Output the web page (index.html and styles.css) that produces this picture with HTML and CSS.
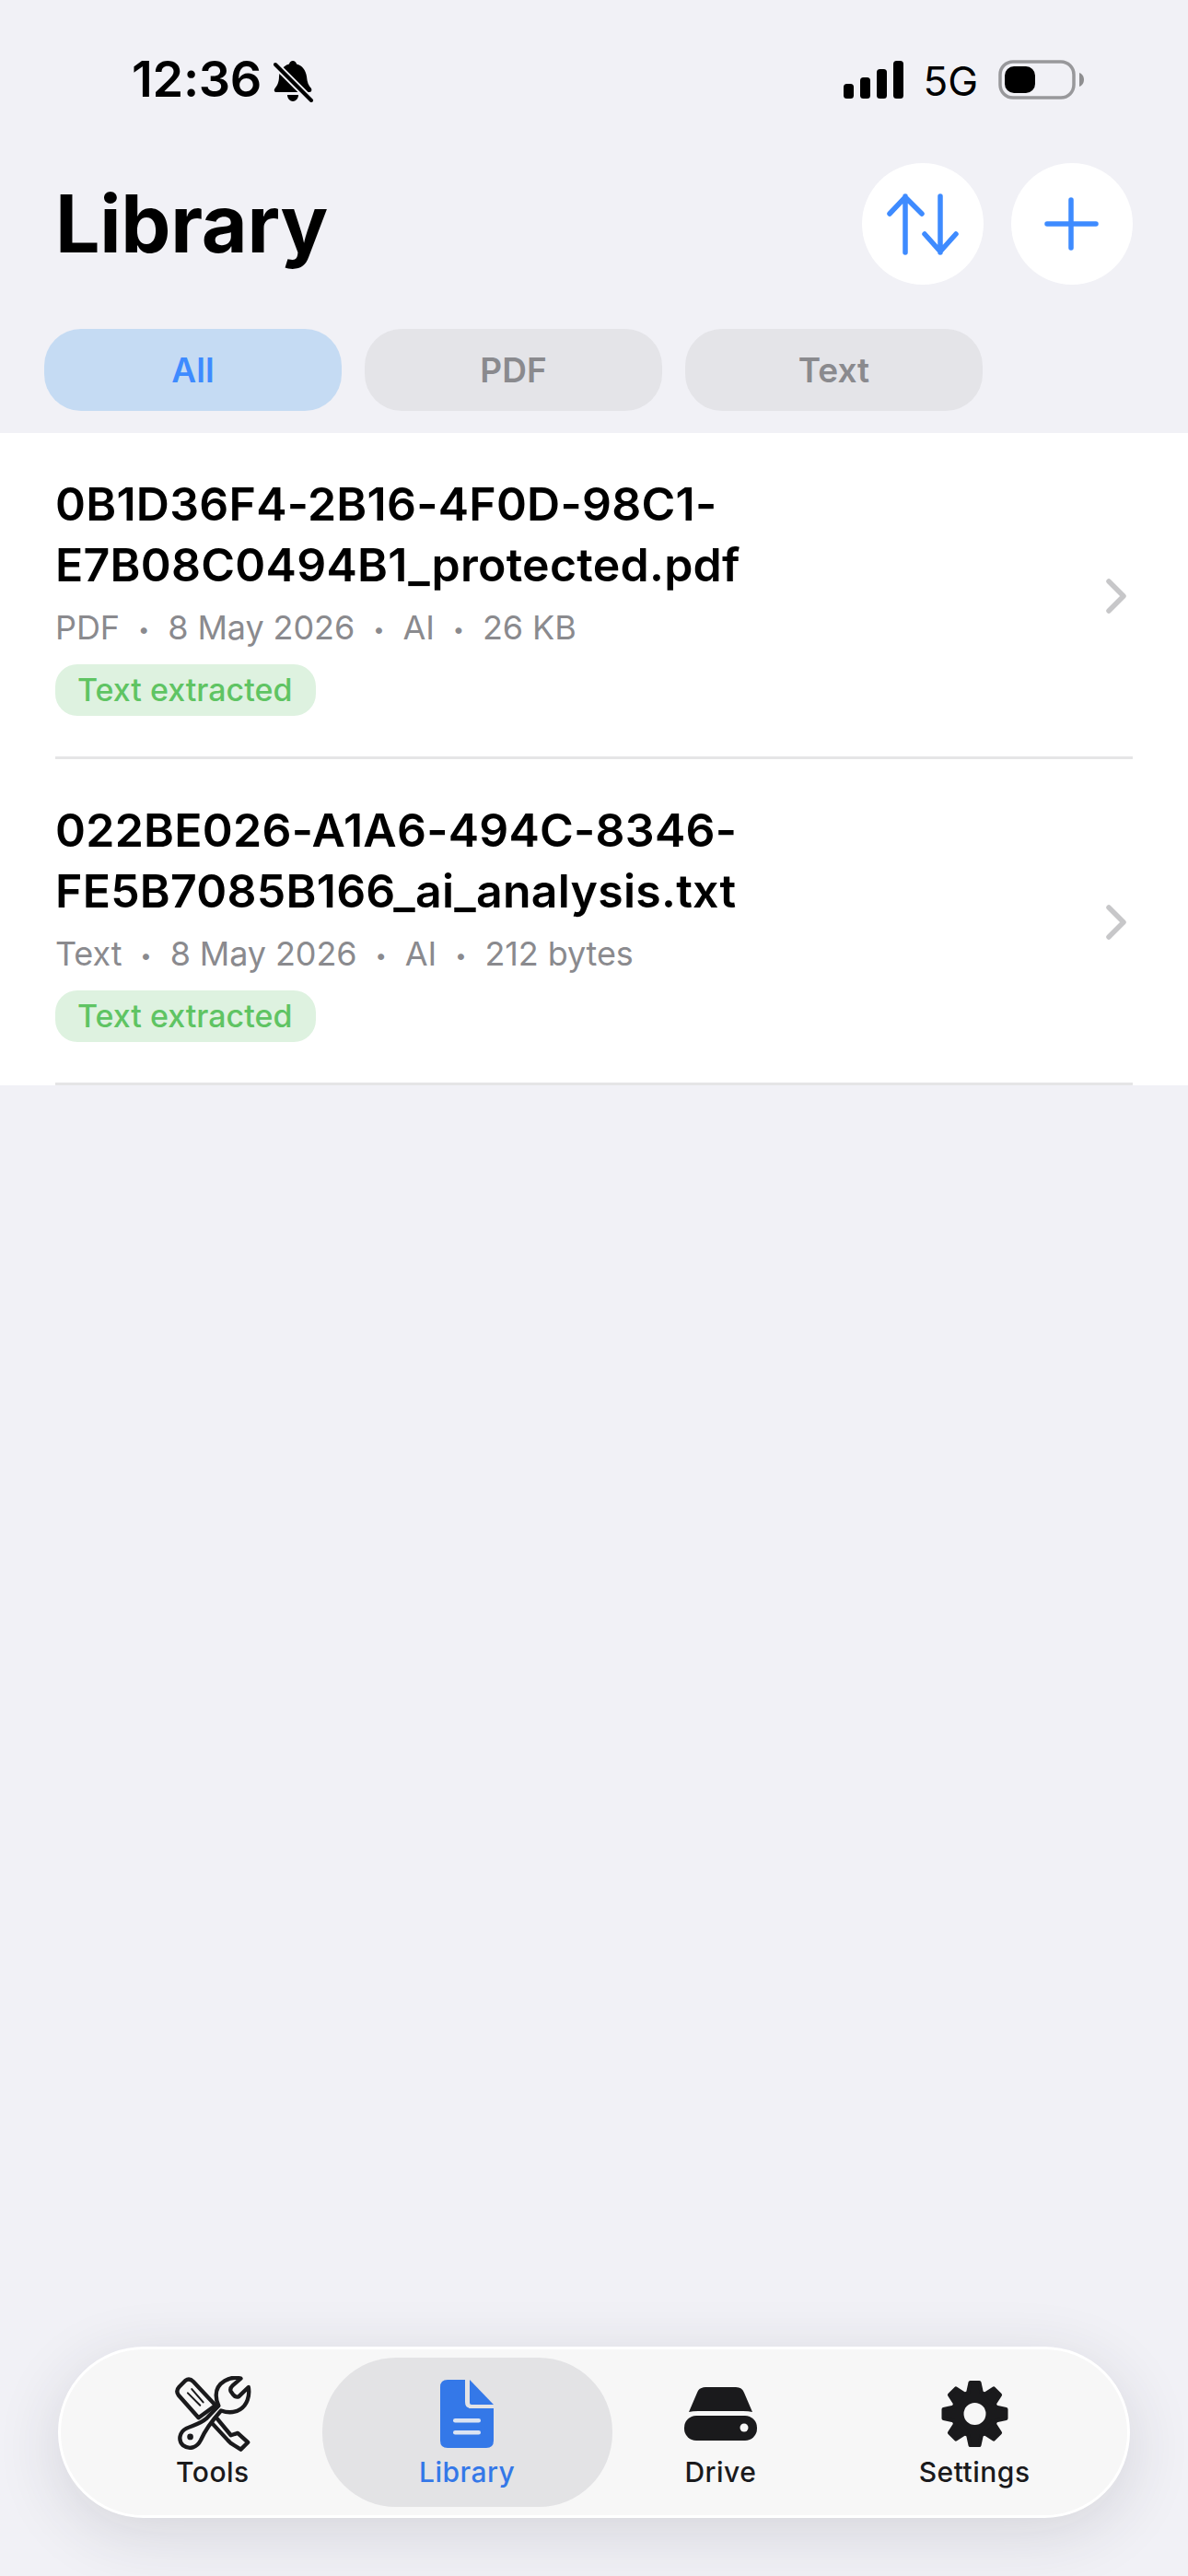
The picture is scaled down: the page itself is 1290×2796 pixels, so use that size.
FILE: index.html
```html
<!DOCTYPE html>
<html lang="en">
<head>
<meta charset="utf-8">
<title>Library</title>
<link rel="stylesheet" href="styles.css">
</head>
<body>
<div class="screen">
  <div class="status">
    <div class="status-left">
      <span class="time">12:36</span>
      <svg class="bell" viewBox="0 0 44 48" width="44" height="48">
        <path d="M21 1C23 1 24.500 2.500 25 4.500C31 6 35 11 36 18C36.500 24 38 28 41 31C42 33 41 35 39 35H3C1 35 0 33 1.500 31C4 28 6 24 6 18C6 16 6.500 14 7.500 12C10 8 13 5.500 17 4.500C17.500 2.500 19 1 21 1Z" fill="#000"/>
        <path d="M15 38H27C27 42 24 45 21 45C18 45 15 42 15 38Z" fill="#000"/>
        <path d="M2 5L41 44" stroke="#f1f1f6" stroke-width="8" fill="none"/>
        <path d="M2 5L41 44" stroke="#000" stroke-width="4" stroke-linecap="round" fill="none"/>
      </svg>
    </div>
    <div class="status-right">
      <svg class="signal" viewBox="0 0 65 41" width="65" height="41">
        <rect x="0" y="25" width="11" height="16" rx="3.500"/>
        <rect x="18" y="18" width="11" height="23" rx="3.500"/>
        <rect x="36" y="9" width="11" height="32" rx="3.500"/>
        <rect x="54" y="0" width="11" height="41" rx="3.500"/>
      </svg>
      <span class="net">5G</span>
      <svg class="battery" viewBox="0 0 93 43" width="93" height="43">
        <rect x="2" y="2" width="80" height="39" rx="14" fill="none" stroke="#98989b" stroke-width="3.500"/>
        <rect x="7" y="7" width="33" height="29" rx="10" fill="#000"/>
        <path d="M88 14C91 15 93 18 93 21.500C93 25 91 28 88 29Z" fill="#8e8e90"/>
      </svg>
    </div>
  </div>

  <header class="head">
    <h1 class="title">Library</h1>
    <div class="head-actions">
      <button class="round-btn" aria-label="Sort">
        <svg viewBox="0 0 132 132" width="132" height="132" fill="none" stroke="#3e8bff" stroke-width="5.500" stroke-linecap="round" stroke-linejoin="round">
          <path d="M47 97V36M30 55L47 37L65 55"/>
          <path d="M85 36V97M68 77L85 96L102 77"/>
        </svg>
      </button>
      <button class="round-btn" aria-label="Add">
        <svg viewBox="0 0 132 132" width="132" height="132" fill="none" stroke="#3e8bff" stroke-width="5.500" stroke-linecap="round">
          <path d="M65 40V92M39 66H92"/>
        </svg>
      </button>
    </div>
  </header>

  <div class="chips">
    <div class="chip chip-on">All</div>
    <div class="chip">PDF</div>
    <div class="chip">Text</div>
  </div>

  <ul class="list">
    <li class="row">
      <div class="row-body">
        <div class="name">0B1D36F4-2B16-4F0D-98C1-<br>E7B08C0494B1_protected.pdf</div>
        <div class="meta">PDF<i class="dot">•</i>8 May 2026<i class="dot">•</i>AI<i class="dot">•</i>26 KB</div>
        <span class="tag">Text extracted</span>
      </div>
      <svg class="chev" viewBox="0 0 24 38" width="24" height="38" fill="none" stroke="#c7c7c9" stroke-width="5.500" stroke-linecap="round" stroke-linejoin="round"><path d="M4 3L20 19L4 35"/></svg>
    </li>
    <li class="row">
      <div class="row-body">
        <div class="name">022BE026-A1A6-494C-8346-<br>FE5B7085B166_ai_analysis.txt</div>
        <div class="meta">Text<i class="dot">•</i>8 May 2026<i class="dot">•</i>AI<i class="dot">•</i>212 bytes</div>
        <span class="tag">Text extracted</span>
      </div>
      <svg class="chev" viewBox="0 0 24 38" width="24" height="38" fill="none" stroke="#c7c7c9" stroke-width="5.500" stroke-linecap="round" stroke-linejoin="round"><path d="M4 3L20 19L4 35"/></svg>
    </li>
  </ul>

  <nav class="tabbar">
    <div class="tab">
      <div class="tab-icon">
        <svg viewBox="56 30 250 245" width="84" height="82" fill="none" stroke="#1a1a1c" stroke-width="13" stroke-linejoin="round" stroke-linecap="round">
          <path d="M72 65L92 45Q105 35 118 48L190 125L135 165L70 92Q60 78 72 65Z"/>
          <path d="M100 85L140 125M113 72L150 115" stroke-width="6"/>
          <path d="M195 168L240 222L262 215L295 245L272 268L240 248L230 238L178 182"/>
          <path d="M272 38C240 28 192 50 192 92C192 105 196 118 200 126L160 168C140 186 115 190 95 200C72 212 68 240 85 255C105 270 130 262 142 238C152 215 165 190 208 142C225 148 250 150 270 138C292 125 302 95 297 66L265 97C258 99 252 96 248 91L240 80C236 72 240 66 246 60Z" fill="#f7f7f7"/>
          <circle cx="108" cy="227" r="10" fill="#1a1a1c" stroke="none"/>
        </svg>
      </div>
      <span class="tab-label">Tools</span>
    </div>
    <div class="tab tab-on">
      <div class="tab-icon">
        <svg viewBox="0 0 58 74" width="58" height="74">
          <path d="M8 0H27V24Q27 31 34 31H58V66Q58 74 50 74H8Q0 74 0 66V8Q0 0 8 0Z" fill="#3478e8"/>
          <path d="M32 0L58 27H34Q32 27 32 25Z" fill="#3478e8"/>
          <rect x="14" y="42" width="30" height="4.500" rx="2.250" fill="#dbe3f2"/>
          <rect x="14" y="55" width="30" height="4.500" rx="2.250" fill="#dbe3f2"/>
        </svg>
      </div>
      <span class="tab-label">Library</span>
    </div>
    <div class="tab">
      <div class="tab-icon">
        <svg viewBox="0 0 79 58" width="79" height="58">
          <path d="M5 27L14 6Q16 0 23 0H56Q63 0 65 6L74 27Q70 26 64 26H15Q9 26 5 27Z" fill="#1a1a1c"/>
          <rect x="0" y="31" width="79" height="27" rx="13" fill="#1a1a1c"/>
          <circle cx="65" cy="44" r="4.500" fill="#f7f7f7"/>
        </svg>
      </div>
      <span class="tab-label">Drive</span>
    </div>
    <div class="tab">
      <div class="tab-icon">
        <svg viewBox="0 0 72 72" width="73" height="72">
          <defs><path id="tooth" d="M31 2H41L44 16H28Z" fill="#1a1a1c" stroke="#1a1a1c" stroke-width="4" stroke-linejoin="round"/></defs>
          <circle cx="36" cy="36" r="26" fill="#1a1a1c"/>
          <use href="#tooth"/>
          <use href="#tooth" transform="rotate(45 36 36)"/>
          <use href="#tooth" transform="rotate(90 36 36)"/>
          <use href="#tooth" transform="rotate(135 36 36)"/>
          <use href="#tooth" transform="rotate(180 36 36)"/>
          <use href="#tooth" transform="rotate(225 36 36)"/>
          <use href="#tooth" transform="rotate(270 36 36)"/>
          <use href="#tooth" transform="rotate(315 36 36)"/>
          <circle cx="36" cy="36" r="12" fill="#f7f7f7"/>
        </svg>
      </div>
      <span class="tab-label">Settings</span>
    </div>
  </nav>
</div>
</body>
</html>
```
FILE: styles.css
```css
* { box-sizing: border-box; }
html, body { margin: 0; padding: 0; }
body { background: #f1f1f6; font-family: Inter, "Noto Sans", sans-serif; color: #000; }
.screen { height: 2796px; display: flex; flex-direction: column; overflow: hidden; }

.status { height: 177px; padding: 56px 113px 0 143px; display: flex; justify-content: space-between; align-items: flex-start; }
.status-left { display: flex; align-items: center; height: 60px; gap: 13px; }
.time { font-size: 54px; font-weight: 600; line-height: 60px; letter-spacing: -0.3px; }
.bell { display: block; margin-top: 6px; }
.status-right { display: flex; align-items: center; height: 60px; }
.signal { display: block; fill: #000; margin-top: 1px; }
.net { font-size: 44px; font-weight: 400; line-height: 60px; margin-left: 21px; margin-top: 4px; }
.battery { display: block; margin-left: 22px; margin-top: 0; }

.head { height: 132px; padding: 0 60px; display: flex; justify-content: space-between; align-items: center; }
.title { margin: 0; font-size: 86px; font-weight: 700; line-height: 132px; letter-spacing: -0.3px; }
.head-actions { display: flex; gap: 30px; }
.round-btn { width: 132px; height: 132px; padding: 0; border: 0; border-radius: 50%; background: #fff; display: block; }
.round-btn svg { display: block; }

.chips { display: flex; gap: 25px; padding: 48px 0 24px 48px; }
.chip { width: 323px; height: 89px; border-radius: 40px; background: #e4e4e8; color: #8a8a8e; font-size: 37px; font-weight: 600; display: flex; align-items: center; justify-content: center; }
.chip-on { background: #c5dbf3; color: #3e8bff; }

.list { list-style: none; margin: 0; padding: 0; background: #fff; }
.row { height: 354px; padding: 44px 60px 0 60px; position: relative; display: flex; justify-content: space-between; align-items: flex-start; }
.row::after { content: ""; position: absolute; left: 60px; right: 60px; bottom: 0; height: 3px; background: #e5e5e6; }
.row-body { display: flex; flex-direction: column; align-items: flex-start; }
.name { font-size: 50px; font-weight: 600; line-height: 66px; letter-spacing: 0.25px; }
.meta { margin-top: 11px; font-size: 36px; line-height: 48px; color: #8a8a8e; font-weight: 400; letter-spacing: -0.1px; }
.dot { font-style: normal; font-size: 22px; margin: 0 20px; vertical-align: 3px; }
.tag { margin-top: 14px; height: 56px; padding: 0 26px 0 24px; border-radius: 24px; background: #def2e0; color: #5fc463; font-size: 34px; font-weight: 500; line-height: 56px; }
.chev { display: block; margin-top: 114px; margin-right: 6px; }

.tabbar { margin: auto 63px 63px; height: 186px; border: 3px solid #fff; border-radius: 93px; background: #f7f7f7; padding: 9px 28px 9px 27px; display: grid; grid-template-columns: repeat(4, 1fr); box-shadow: 0 16px 70px rgba(40, 40, 60, 0.14); }
.tab { display: flex; flex-direction: column; align-items: center; justify-content: flex-start; color: #1a1a1c; }
.tab-icon { height: 97px; display: flex; align-items: center; justify-content: center; margin-top: 12px; }
.tab-icon svg { display: block; }
.tab-label { font-size: 30px; font-weight: 500; line-height: 30px; letter-spacing: 0.5px; }
.tab-on { margin: 0 -20px 0 -19px; border-radius: 80px; background: #e3e3e5; color: #3478e8; }
```
